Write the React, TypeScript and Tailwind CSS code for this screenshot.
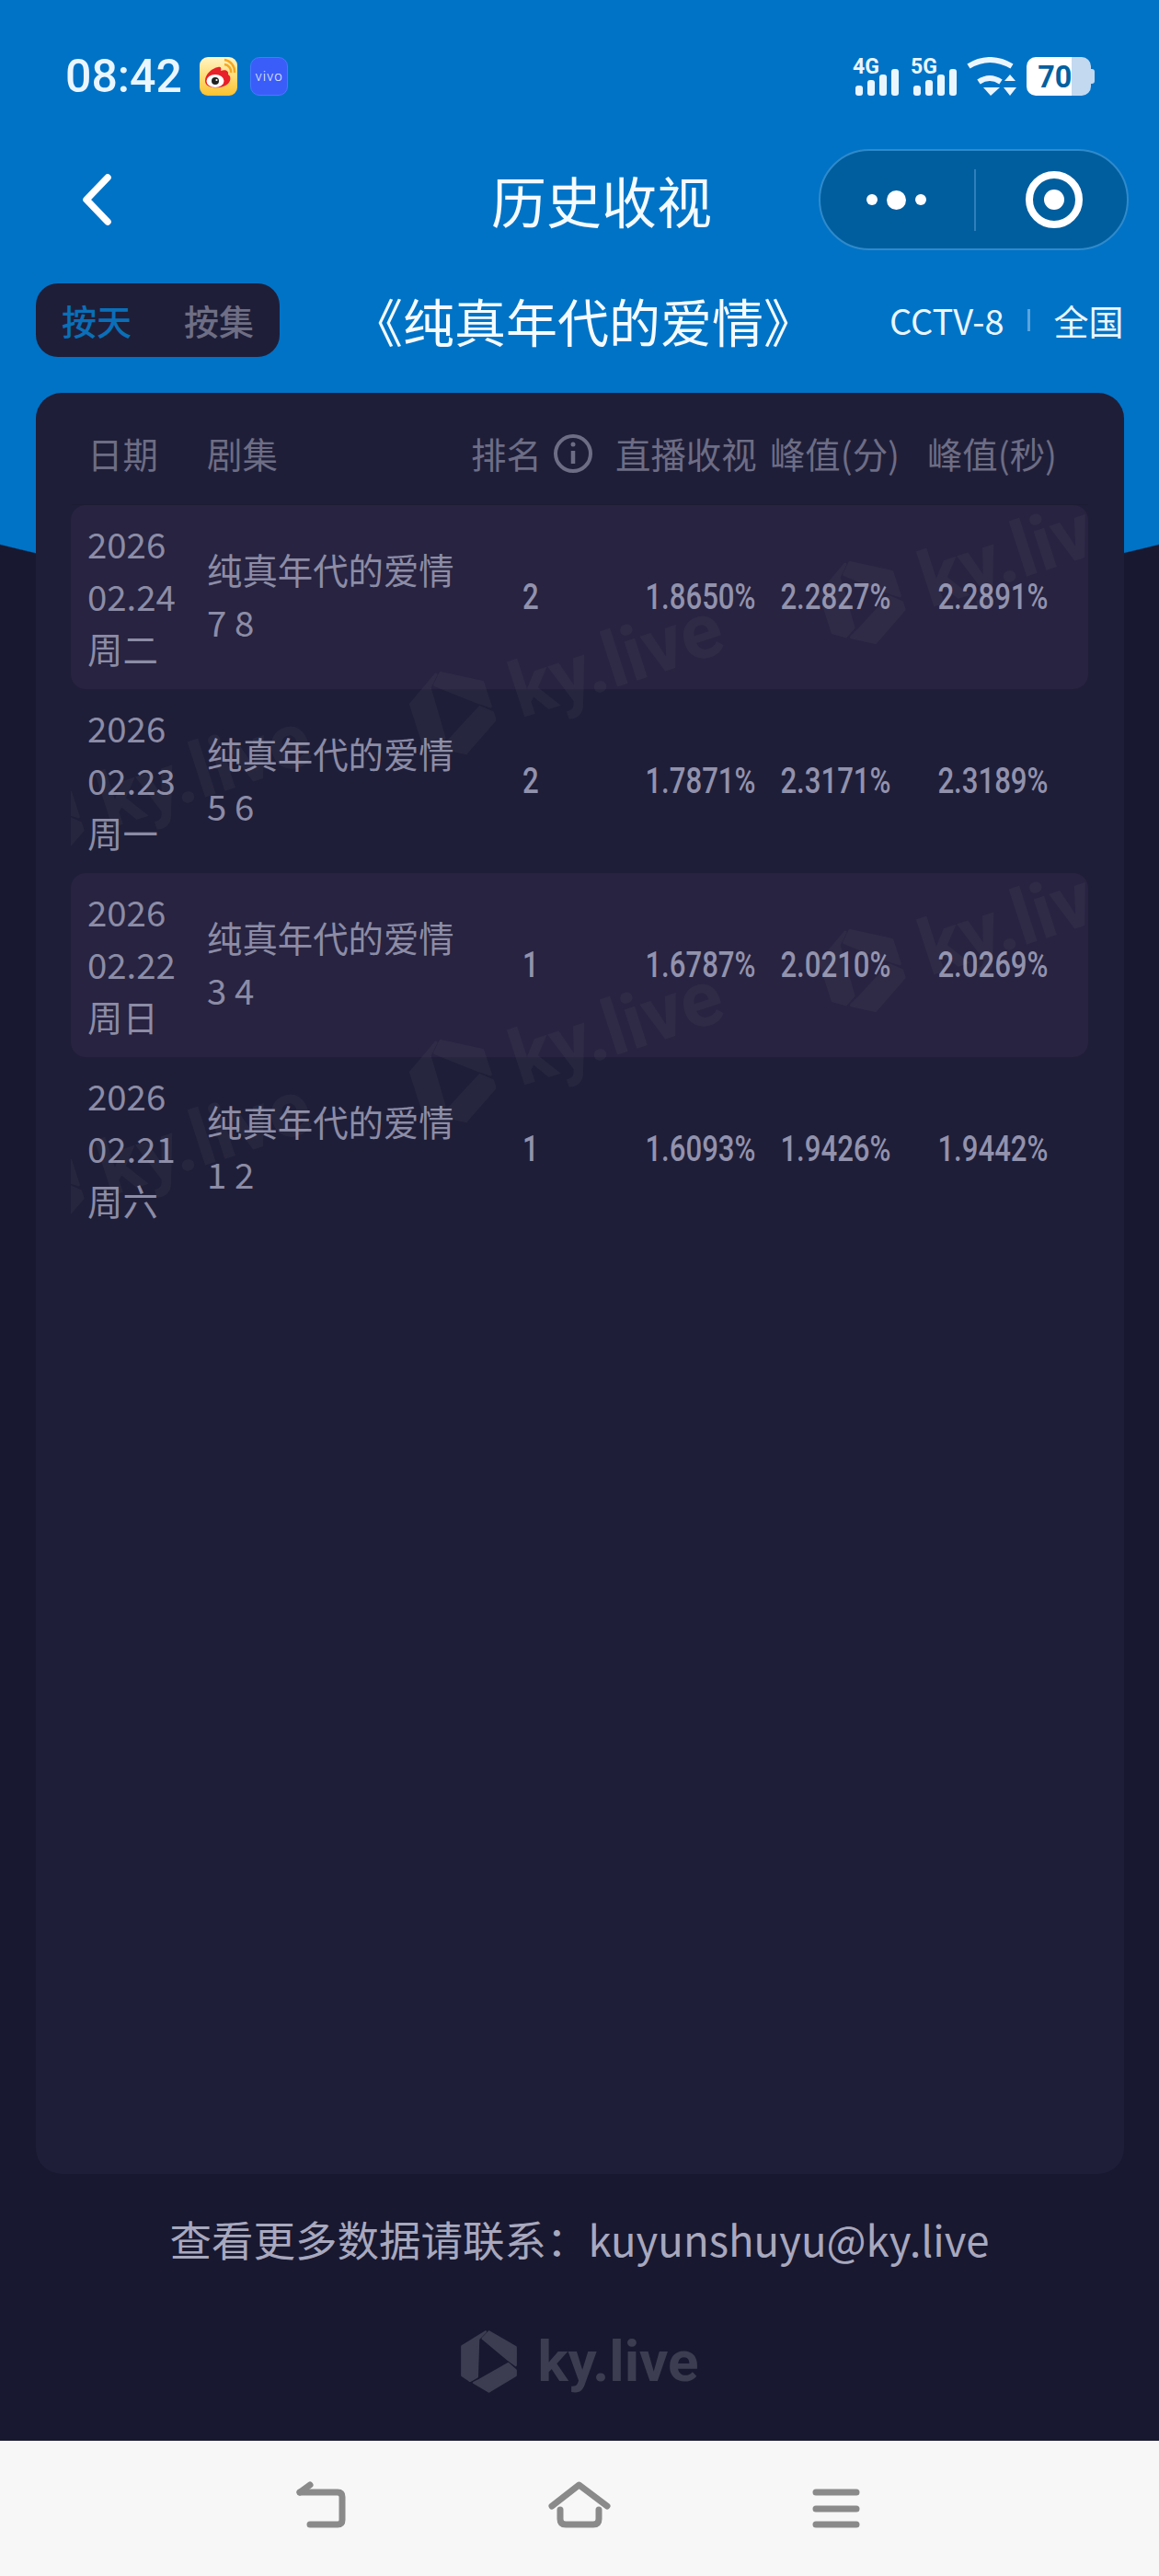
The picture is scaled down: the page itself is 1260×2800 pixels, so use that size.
import React from "react";

const rows = [
  { d: "02.24", w: "周二", ep: "7 8", rank: "2", a: "1.8650%", b: "2.2827%", c: "2.2891%", alt: true },
  { d: "02.23", w: "周一", ep: "5 6", rank: "2", a: "1.7871%", b: "2.3171%", c: "2.3189%", alt: false },
  { d: "02.22", w: "周日", ep: "3 4", rank: "1", a: "1.6787%", b: "2.0210%", c: "2.0269%", alt: true },
  { d: "02.21", w: "周六", ep: "1 2", rank: "1", a: "1.6093%", b: "1.9426%", c: "1.9442%", alt: false },
];

function LogoMark({ className }: { className?: string }) {
  return (
    <svg viewBox="-4 -4 194 215" className={className} fill="currentColor" stroke="currentColor" strokeWidth="7" strokeLinejoin="round">
      <polygon points="82,3 3,52 3,150 30,168 54,154 58,28" />
      <polygon points="94,3 183,55 183,116 156,96 72,26" />
      <polygon points="183,132 183,150 93,204 42,174 62,164 158,110" />
    </svg>
  );
}

const marks = [
  { x: 545, y: 184 },
  { x: 990, y: 64 },
  { x: 97, y: 304 },
  { x: 545, y: 584 },
  { x: 990, y: 464 },
  { x: 97, y: 704 },
];

function Watermarks() {
  return (
    <div className="absolute left-0 top-0 h-[800px] w-[1106px] overflow-hidden pointer-events-none">
      {marks.map((m, i) => (
        <div
          key={i}
          className="absolute flex items-center gap-[24px] w-[360px] h-[110px] -rotate-[18deg] text-white opacity-[0.035]"
          style={{ left: m.x - 180, top: m.y - 55 }}
        >
          <LogoMark className="w-[88px] h-[100px] shrink-0" />
          <span className="font-['Roboto',sans-serif] font-bold text-[84px] leading-none">ky.live</span>
        </div>
      ))}
    </div>
  );
}

function Num({ children, origin = "right" }: { children: React.ReactNode; origin?: "left" | "right" }) {
  return (
    <span
      className={
        "inline-block font-['Roboto',sans-serif] font-medium text-[38px] leading-[57px] text-[#9292ad] scale-x-[0.82] " +
        (origin === "right" ? "origin-right" : "origin-left")
      }
    >
      {children}
    </span>
  );
}

function Signal({ label }: { label: string }) {
  return (
    <svg width="50" height="42" viewBox="0 0 50 42" className="shrink-0 overflow-visible">
      <text x="0" y="18" fontFamily="Roboto, sans-serif" fontWeight="700" fontSize="23" fill="#eaf6ff">{label}</text>
      <rect x="3" y="31" width="8" height="11" rx="3" fill="#eaf6ff" />
      <rect x="16" y="25" width="8" height="17" rx="3" fill="#eaf6ff" />
      <rect x="29" y="19" width="8" height="23" rx="3" fill="#eaf6ff" />
      <rect x="42" y="13" width="8" height="29" rx="3" fill="#eaf6ff" />
    </svg>
  );
}

function Wifi() {
  return (
    <svg width="56" height="42" viewBox="0 0 56 42" className="shrink-0">
      <path d="M3 10 Q26 -4 50 10" stroke="#eaf6ff" strokeWidth="6" fill="none" strokeLinecap="butt" />
      <path d="M14 27 Q26 19 38 27" stroke="#eaf6ff" strokeWidth="6" fill="none" strokeLinecap="butt" />
      <path d="M19 33 H37 L27 42 Z" fill="#eaf6ff" />
      <path d="M42 26 H54 L48 19 Z M41 33 H55 L48 42 Z" fill="#eaf6ff" />
    </svg>
  );
}

function Weibo() {
  return (
    <svg width="41" height="42" viewBox="0 0 41 42" className="shrink-0">
      <defs>
        <linearGradient id="wb" x1="0" y1="0" x2="0" y2="1">
          <stop offset="0" stopColor="#fff6c4" />
          <stop offset="1" stopColor="#fcc22e" />
        </linearGradient>
      </defs>
      <rect width="41" height="42" rx="9" fill="url(#wb)" />
      <path d="M6 26 C6 18 14 12 20 11 C23 10 24 12 23 15 C28 13 32 15 31 19 C35 21 34 28 28 31 C20 35 6 34 6 26 Z" fill="#e8202a" />
      <ellipse cx="17" cy="26" rx="9.5" ry="7" fill="#fff" />
      <circle cx="17" cy="26" r="4" fill="#222" />
      <circle cx="18.5" cy="25" r="1.1" fill="#fff" />
      <path d="M27 8 A8 8 0 0 1 34 17 M27 3 A13 13 0 0 1 38 17" stroke="#f6a623" strokeWidth="2.5" fill="none" />
    </svg>
  );
}

function NavBack() {
  return (
    <svg width="60" height="60" viewBox="0 0 60 60" className="shrink-0" fill="none" stroke="#8a8a8a" strokeWidth="7" strokeLinecap="round" strokeLinejoin="round">
      <path d="M6 14 H47 Q52 14 52 19 V44 Q52 49 47 49 H17" />
      <path d="M6 14 L17 6" />
    </svg>
  );
}

function NavHome() {
  return (
    <svg width="70" height="60" viewBox="0 0 70 60" className="shrink-0" fill="none" stroke="#8a8a8a" strokeWidth="7" strokeLinecap="round" strokeLinejoin="round">
      <path d="M5 29 L34.500 6 L65 29" />
      <path d="M14 33 V43 Q14 49 20 49 H50 Q56 49 56 43 V33" />
    </svg>
  );
}

function NavMenu() {
  return (
    <svg width="60" height="60" viewBox="0 0 60 60" className="shrink-0" fill="none" stroke="#8a8a8a" strokeWidth="7" strokeLinecap="round">
      <path d="M7 14 H51 M7 32 H51 M7 49 H51" />
    </svg>
  );
}

export default function App() {
  return (
    <div className="relative flex flex-col w-[1260px] h-[2800px] overflow-hidden font-['Noto_Sans_CJK_SC',sans-serif] bg-[radial-gradient(circle_2600px_at_630px_-1930px,#0073c6_99.95%,#181830_100%)]">
      {/* status bar */}
      <div className="flex items-center h-[42px] mt-[62px] pl-[71px] pr-[70px]">
        <span className="font-['Roboto',sans-serif] font-medium text-[50px] leading-[42px] text-[#eaf6ff] w-[146px]">08:42</span>
        <Weibo />
        <div className="flex items-center justify-center ml-[14px] w-[41px] h-[42px] rounded-[10px] bg-[#3a5dfa] border border-[#4a78ff] text-[#e8eeff] text-[15px] tracking-[1px] leading-none font-light font-['Roboto',sans-serif]">vivo</div>
        <div className="ml-auto flex items-center h-[42px]">
          <Signal label="4G" />
          <div className="w-[13px]" />
          <Signal label="5G" />
          <div className="w-[10px]" />
          <Wifi />
          <div className="w-[10px]" />
          <div className="flex items-center">
            <div className="flex w-[70px] h-[42px] rounded-[10px] overflow-hidden bg-[linear-gradient(90deg,#ffffff_70%,#c3d9ef_70%)] items-center justify-center">
              <span className="font-['Roboto',sans-serif] font-bold text-[34px] leading-none text-[#00609f] pr-[8px] scale-x-[0.95]">70</span>
            </div>
            <div className="w-[4px] h-[16px] rounded-r-[3px] bg-[#c3d9ef]" />
          </div>
        </div>
      </div>

      {/* title bar */}
      <div className="flex items-center h-[110px] mt-[58px] pl-[80px]">
        <svg width="50" height="66" viewBox="0 0 50 66" className="shrink-0" fill="none" stroke="#fff" strokeWidth="7.500" strokeLinecap="round" strokeLinejoin="round">
          <path d="M37 9 L14 33 L37 57" />
        </svg>
        <div className="ml-[404px] w-[240px] text-[60px] leading-[70px] text-[#f4fbff] whitespace-nowrap">历史收视</div>
        <div className="ml-[116px] flex items-center w-[337px] h-[110px] rounded-full bg-[#005e9e] border-2 border-[#2f8acb]">
          <div className="flex items-center w-[167px] pl-[50px] gap-[10px]">
            <span className="w-[12px] h-[12px] rounded-full bg-white" />
            <span className="w-[21px] h-[21px] rounded-full bg-white" />
            <span className="w-[12px] h-[12px] rounded-full bg-white" />
          </div>
          <div className="w-[2px] h-[67px] bg-[#2f7fba]" />
          <div className="flex justify-center items-center ml-[54px] w-[62px] h-[62px] rounded-full border-[8px] border-white">
            <span className="w-[22px] h-[22px] rounded-full bg-white" />
          </div>
        </div>
      </div>

      {/* filter row */}
      <div className="flex items-center h-[80px] mt-[36px] ml-[39px]">
        <div className="flex items-center w-[265px] h-[80px] rounded-[24px] bg-[#1f1e38] pl-[28px] text-[38px] leading-none font-medium">
          <span className="text-[#0a6fb8] w-[133px]">按天</span>
          <span className="text-[#6e6e84]">按集</span>
        </div>
        <div className="ml-[78px] w-[504px] text-[56px] leading-[60px] text-[#f4fbff] whitespace-nowrap">《纯真年代的爱情》</div>
        <span className="ml-[81px] text-[38px] leading-none text-[#eaf6ff]">CCTV-8</span>
        <span className="ml-[25px] w-[3px] h-[24px] bg-[#5aa5de]" />
        <span className="ml-[26px] text-[38px] leading-none text-[#eaf6ff]">全国</span>
      </div>

      {/* card */}
      <div className="ml-[39px] w-[1183px] h-[1936px] mt-[39px] rounded-[28px] bg-[#1f1e38] pl-[38px]">
        <div className="grid grid-cols-[148px_287px_157px_153px_156px_171px] items-center w-[1106px] h-[122px] pt-[10px] text-[38.400px] leading-[57px] text-[#6d6d85] border-b border-[#1c1c33]">
          <span className="pl-[18px]">日期</span>
          <span>剧集</span>
          <span className="flex items-center">
            排名
            <svg width="44" height="44" viewBox="0 0 44 44" className="ml-[12px] shrink-0" fill="none" stroke="#6d6d85" strokeWidth="4">
              <circle cx="22" cy="22" r="19" />
              <path d="M22 19 V33" strokeWidth="4.500" />
              <circle cx="22" cy="12" r="2.500" fill="#6d6d85" stroke="none" />
            </svg>
          </span>
          <span className="whitespace-nowrap">直播收视</span>
          <span className="text-right whitespace-nowrap">峰值(分)</span>
          <span className="text-right whitespace-nowrap">峰值(秒)</span>
        </div>
        <div className="relative w-[1106px]">
          {rows.map((r) => (
            <div
              key={r.d}
              className={
                "grid grid-cols-[148px_343px_100px_154px_146px_172px] items-center h-[200px] pb-[4px] rounded-[16px] text-[38.400px] leading-[57px] text-[#8c8ca6] " +
                (r.alt ? "bg-[#272340]" : "")
              }
            >
              <div className="pl-[18px] flex flex-col">
                <span>2026</span>
                <span>{r.d}</span>
                <span>{r.w}</span>
              </div>
              <div className="flex flex-col whitespace-pre">
                <span>纯真年代的爱情</span>
                <span>{r.ep}</span>
              </div>
              <div><Num origin="left">{r.rank}</Num></div>
              <div className="text-right"><Num>{r.a}</Num></div>
              <div className="text-right"><Num>{r.b}</Num></div>
              <div className="text-right"><Num>{r.c}</Num></div>
            </div>
          ))}
          <Watermarks />
        </div>
      </div>

      {/* footer */}
      <div className="mt-[36px] h-[68px] text-center text-[45.500px] leading-[68px] text-[#a8a8be] whitespace-nowrap">查看更多数据请联系：kuyunshuyu@ky.live</div>
      <div className="flex items-center justify-center h-[70px] mt-[65px] text-[#3d3d52] gap-[21px]">
        <LogoMark className="w-[63px] h-[70px] shrink-0" />
        <span className="font-['Roboto',sans-serif] font-bold text-[62px] leading-[70px]">ky.live</span>
      </div>

      {/* nav bar */}
      <div className="absolute left-0 bottom-0 w-[1260px] h-[147px] bg-[#f7f7f7] flex pt-[42px] pl-[320px] gap-[215px]">
        <NavBack />
        <NavHome />
        <NavMenu />
      </div>
    </div>
  );
}
